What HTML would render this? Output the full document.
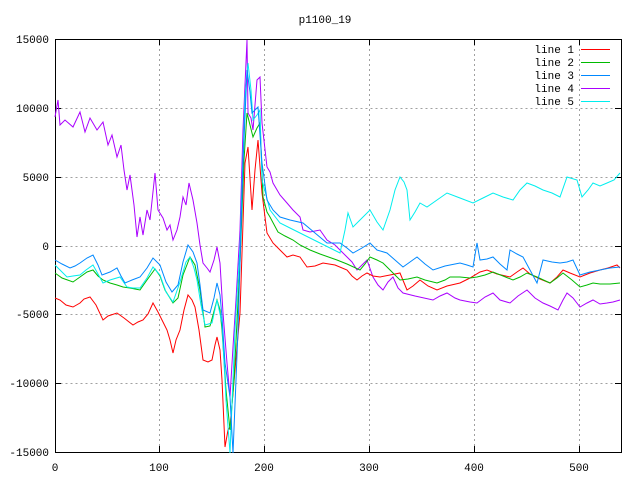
<!DOCTYPE html>
<html><head><style>body{margin:0;background:#fff}svg{display:block}text{font-family:"Liberation Mono","DejaVu Sans Mono",monospace;font-size:11px;fill:#000}</style></head><body>
<svg width="640" height="480" viewBox="0 0 640 480">
<g stroke="#a0a0a0" stroke-dasharray="2,3" stroke-width="1">
<path d="M55.5 108.5H621M55.5 177.5H621M55.5 246.5H621M55.5 314.5H621M55.5 383.5H621"/>
<path d="M159.5 39V452M264.5 39V452M369.5 39V452M474.5 39V452M579.5 39V452"/>
</g>
<rect x="55.5" y="39.5" width="566" height="413" fill="none" stroke="#000"/>
<g stroke="#000">
<path d="M55 108.5h6M55 177.5h6M55 246.5h6M55 314.5h6M55 383.5h6M621 108.5h-6M621 177.5h-6M621 246.5h-6M621 314.5h-6M621 383.5h-6"/>
<path d="M159.5 452v-6M264.5 452v-6M369.5 452v-6M474.5 452v-6M579.5 452v-6M159.5 39v6M264.5 39v6M369.5 39v6M474.5 39v6M579.5 39v6"/>
</g>
<g text-anchor="end">
<text x="49" y="43">15000</text><text x="49" y="112">10000</text><text x="49" y="181">5000</text><text x="49" y="250">0</text><text x="49" y="318">-5000</text><text x="49" y="387">-10000</text><text x="49" y="456">-15000</text>
</g>
<g text-anchor="middle">
<text x="55" y="471">0</text><text x="159" y="471">100</text><text x="264" y="471">200</text><text x="369" y="471">300</text><text x="474" y="471">400</text><text x="579" y="471">500</text>
<text x="325" y="23">p1100_19</text>
</g>
<g text-anchor="end"><text x="574" y="53">line 1</text><text x="574" y="66">line 2</text><text x="574" y="79">line 3</text><text x="574" y="92">line 4</text><text x="574" y="105">line 5</text></g>
<g fill="none" stroke-width="1">
<path stroke="#f00" d="M581 49.5H610"/><path stroke="#0b0" d="M581 62.5H610"/><path stroke="#08f" d="M581 75.5H610"/><path stroke="#a0f" d="M581 88.5H610"/><path stroke="#0ee" d="M581 101.5H610"/>
<polyline stroke="#a0f" points="55,117 58,100 60,125 65,120 73,127 80,112 85,132 90,118 97,130 103,122 108,145 112,135 117,157 121,145 124,170 127,190 130,175 134,205 137,237 140,217 143,235 147,210 150,220 155,173 158,210 163,218 167,230 170,225 173,240 177,230 180,217 183,197 186,205 189,183 193,200 197,223 200,245 203,263 207,268 210,272 214,260 217,247 220,263 223,313 227,363 230,397 233,347 236,300 240,230 243,130 247,40 248,113 251,118 253,130 257,80 260,77 262,123 267,167 270,172 273,183 280,195 287,203 293,210 300,217 303,230 310,232 320,230 327,240 335,245 347,257 352,262 357,270 362,265 367,260 373,277 378,285 383,290 388,282 393,277 398,288 403,293 415,296 433,300 440,296 447,293 455,298 460,300 470,302 477,303 485,297 493,293 500,300 510,303 518,296 527,290 535,298 543,303 550,306 558,310 563,300 567,293 573,298 580,307 587,303 593,300 600,304 607,303 613,302 620,300"/>
<polyline stroke="#f00" points="55,298 60,300 66,305 73,307 80,303 84,299 90,297 96,305 103,320 108,316 117,313 124,318 133,325 138,322 143,320 148,314 153,303 158,312 163,322 167,330 170,340 173,353 176,340 180,330 184,310 188,295 192,300 195,307 199,330 203,360 208,362 212,360 215,345 217,337 220,350 222,380 225,447 228,430 230,427 235,370 240,313 245,163 248,147 252,210 255,170 258,140 262,193 267,233 273,243 280,250 287,257 293,255 300,257 307,267 315,266 323,263 335,265 347,270 352,276 357,280 362,276 367,273 373,276 380,277 390,275 400,273 407,290 413,286 420,280 428,286 437,290 447,286 460,283 470,278 480,272 487,270 497,274 510,277 517,272 523,268 530,274 540,279 550,283 557,277 563,270 570,273 580,277 590,273 600,270 608,268 617,265 620,268"/>
<polyline stroke="#0b0" points="55,273 62,278 73,282 80,277 87,272 93,270 98,276 103,280 110,283 117,285 123,287 130,288 135,289 140,290 147,280 155,269 160,276 165,290 173,303 178,298 183,275 190,257 195,265 200,290 205,327 210,326 213,315 217,300 220,310 222,330 226,390 230,430 234,380 240,263 244,160 247,113 250,125 253,137 257,128 260,123 263,197 267,212 270,217 278,232 285,236 293,240 300,245 310,250 320,254 337,260 347,264 360,270 365,264 370,257 377,260 383,263 390,270 400,280 408,279 417,277 425,280 437,283 445,280 450,277 460,277 470,278 477,277 485,275 493,272 503,276 513,280 520,277 527,273 537,277 550,283 557,278 563,273 572,280 580,287 587,285 593,283 600,284 610,284 620,283"/>
<polyline stroke="#0ee" points="55,265 60,270 67,277 73,276 80,275 86,270 93,265 98,274 103,283 110,280 120,277 127,287 133,288 140,288 147,278 153,267 160,275 166,292 173,302 180,282 186,262 190,257 194,268 197,280 201,305 205,325 212,323 217,300 222,323 226,400 230,453 235,330 240,247 245,97 248,63 251,90 253,120 257,115 260,110 262,180 270,210 280,223 290,228 300,233 320,243 340,253 345,230 348,213 353,227 360,220 370,210 377,222 383,230 390,210 395,190 400,177 404,182 407,190 410,220 415,212 420,203 427,207 437,200 447,193 460,198 473,203 483,198 493,193 503,197 513,200 520,190 527,183 535,186 543,190 552,193 560,197 567,177 577,180 582,197 588,190 593,183 600,186 607,183 614,180 620,173"/>
<polyline stroke="#08f" points="55,260 62,264 70,268 75,266 80,263 87,258 93,255 98,265 102,275 110,272 117,268 121,276 125,283 132,280 140,277 147,268 153,258 160,265 166,282 172,292 178,285 183,262 188,245 193,252 197,263 200,285 203,310 210,313 214,298 217,283 220,295 222,317 225,363 230,397 233,453 236,380 238,330 243,163 247,70 250,92 252,113 255,110 258,107 262,163 267,200 273,210 280,217 290,220 303,223 315,233 327,243 340,243 347,248 353,253 362,248 370,243 377,250 387,253 395,260 403,267 410,262 417,257 425,264 433,270 445,266 460,263 467,265 473,267 477,243 480,260 487,259 493,257 500,264 507,270 510,250 517,254 523,257 530,270 537,283 543,260 552,262 560,263 567,262 573,260 580,275 590,272 600,270 610,268 620,267"/>
</g>
</svg>
</body></html>
